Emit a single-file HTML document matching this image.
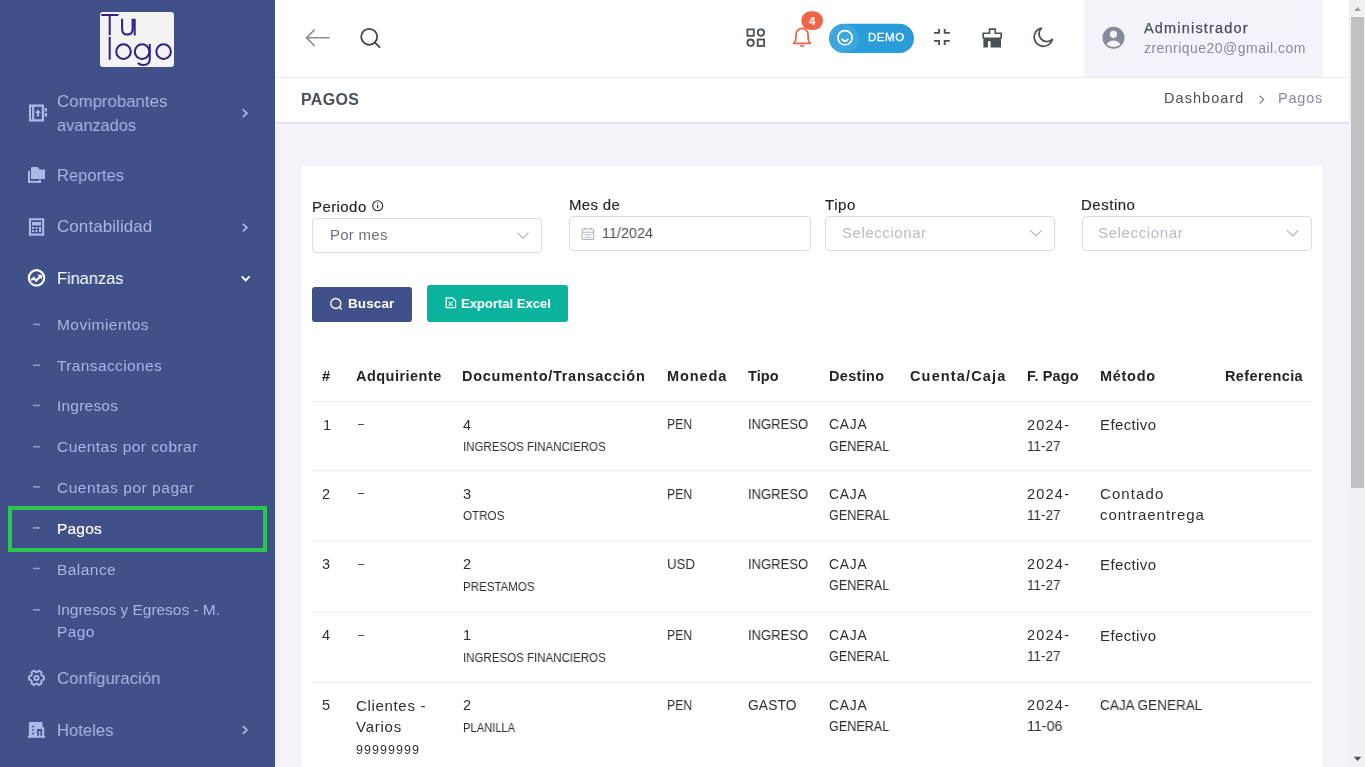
<!DOCTYPE html>
<html><head><meta charset="utf-8">
<style>
*{box-sizing:border-box;margin:0;padding:0}
html,body{width:1365px;height:767px;overflow:hidden;background:#f3f3f9;font-family:"Liberation Sans",sans-serif;color:#212529;position:relative}
.a{position:absolute}
.t{position:absolute;white-space:nowrap;will-change:transform}
svg{position:absolute;overflow:visible}
</style></head><body>
<!-- sidebar -->
<div class="a" style="left:0;top:0;width:275px;height:767px;background:#405189"></div>
<div class="a" style="left:100px;top:12px;width:74px;height:55px;background:#f3f3f3;border-radius:3px"></div>
<div class="a" style="left:8px;top:506px;width:259px;height:46px;border:4px solid #2bc54f"></div>

<!-- sidebar icons -->
<svg style="left:0;top:0" width="275" height="767">
 <g fill="#abb9e8">
  <!-- comprobantes -->
  <path fill-rule="evenodd" d="M29 104.6h15v16.9h-15z M31 106.8v12.5h1.1v-12.5z M34.2 106.8v12.5h7.6v-12.5z"/>
  <path d="M38 109.6l-3 3.3h2v3.7h2v-3.7h2z"/>
  <rect x="44.7" y="108" width="2.3" height="3.5"/><rect x="44.7" y="113" width="2.3" height="3.5"/>
  <!-- reportes -->
  <rect x="28" y="170.8" width="2" height="12"/>
  <rect x="28" y="180.8" width="13" height="2"/>
  <rect x="39" y="179.6" width="2" height="3.2"/>
  <path d="M31 168.2c0-.7.5-1.2 1.2-1.2h5.3l2.2 2.4H45v9.6H31z"/>
  <!-- contabilidad -->
  <path fill-rule="evenodd" d="M28.9 218.2h15.3v17.5H28.9z M31 220.3v13.3h11.1v-13.3z"/>
  <rect x="32" y="222" width="9" height="3.5"/>
  <rect x="32" y="227" width="2" height="2"/><rect x="35.3" y="227" width="2.2" height="2"/><rect x="39" y="227" width="2" height="5"/>
  <rect x="32" y="230" width="2" height="2"/><rect x="35.3" y="230" width="2.2" height="2"/>
  <!-- hoteles -->
  <path d="M29.5 722.1h12.5c.3 0 .5.2.5.5v4.6h1.7v8.8H28.9v-13.4c0-.3.3-.5.6-.5z"/>
  <rect x="27.9" y="735.8" width="17.3" height="2"/>
 </g>
 <g fill="#405189">
  <rect x="32.1" y="725.9" width="2.1" height="1.3"/><rect x="32.1" y="729.4" width="2.1" height="1.3"/><rect x="32.1" y="732.9" width="2.1" height="1.3"/>
  <path d="M37.2 735.8V729H42v6.8h-1.6v-4.9h-1.5v4.9z"/>
 </g>
 <!-- finanzas -->
 <g fill="none" stroke="#fff" stroke-width="2.2">
  <circle cx="36.5" cy="277.9" r="7.7"/>
  <path d="M31 280.3l2.9-2.3 2.2 2.7 4.4-4.4" stroke-width="2"/>
 </g>
 <path d="M37.3 274.8h4.6v4.6z" fill="#fff"/>
 <!-- configuracion -->
 <g fill="none" stroke="#abb9e8" stroke-width="1.9" stroke-linejoin="round">
  <path d="M41.97 675.69 L43.93 676.32 L43.93 679.48 L41.97 680.11 L41.15 681.53 L41.59 683.55 L38.85 685.13 L37.32 683.74 L35.68 683.74 L34.15 685.13 L31.41 683.55 L31.85 681.53 L31.03 680.11 L29.07 679.48 L29.07 676.32 L31.03 675.69 L31.85 674.27 L31.41 672.25 L34.15 670.67 L35.68 672.06 L37.32 672.06 L38.85 670.67 L41.59 672.25 L41.15 674.27Z"/>
  <circle cx="36.5" cy="677.9" r="2.1" stroke-width="1.8"/>
 </g>
 <!-- chevrons -->
 <g fill="none" stroke="#abb9e8" stroke-width="1.7">
  <path d="M242.8 109.4l4.1 3.8-4.1 3.8"/>
  <path d="M242.8 223.8l4.1 3.8-4.1 3.8"/>
  <path d="M242.8 726.2l4.1 3.8-4.1 3.8"/>
 </g>
 <path d="M241.8 276.4l3.9 3.9 3.9-3.9" fill="none" stroke="#fff" stroke-width="1.9"/>
 <!-- dashes -->
 <g fill="#abb9e8" opacity="0.7">
  <rect x="33" y="323.6" width="7" height="1.6"/>
  <rect x="33" y="364.5" width="7" height="1.6"/>
  <rect x="33" y="404.6" width="7" height="1.6"/>
  <rect x="33" y="445.9" width="7" height="1.6"/>
  <rect x="33" y="486" width="7" height="1.6"/>
  <rect x="33" y="527" width="7" height="1.8"/>
  <rect x="33" y="567.7" width="7" height="1.6"/>
  <rect x="33" y="609" width="7" height="1.6"/>
 </g>
 <!-- logo text -->
 <g fill="none" stroke="#2f2187" stroke-width="2" stroke-linecap="butt">
  <path d="M101.2 15h17.2 M109.7 15v20.2"/>
  <path d="M122.1 18.8v9.6c0 4 1.9 6.2 5.2 6.2s5.3-2.2 5.3-6.2V18.8 M134.7 18.8v16.6"/>
  <path d="M109.7 36.8v22.9"/>
  <circle cx="123.5" cy="51.6" r="7.3"/>
  <circle cx="142.1" cy="51.6" r="7.3"/>
  <path d="M149.8 44v14.8c0 4.3-2.5 6.3-6.5 6.3-2.3 0-4.2-.8-5.5-2.1"/>
  <circle cx="163.6" cy="51.6" r="7.3"/>
 </g>
</svg>

<!-- header -->
<div class="a" style="left:275px;top:0;width:1074px;height:77px;background:#fff"></div>
<div class="a" style="left:275px;top:77px;width:1074px;height:1px;background:#e9ebec"></div>
<div class="a" style="left:1084px;top:0;width:239px;height:77px;background:#f3f3f9"></div>
<div class="a" style="left:275px;top:78px;width:1074px;height:44px;background:#fff;box-shadow:0 1px 2px rgba(56,65,74,.15)"></div>

<svg style="left:0;top:0" width="1365" height="130">
 <!-- back arrow -->
 <g fill="none" stroke="#878a99" stroke-width="1.6" stroke-linecap="round">
  <path d="M306.5 37.8h22.6 M314.2 30.1l-7.7 7.7 7.7 7.7"/>
 </g>
 <!-- search -->
 <g fill="none" stroke="#3f454c" stroke-width="1.8" stroke-linecap="round">
  <circle cx="369.2" cy="36.8" r="8"/>
  <path d="M375.2 42.8l4.4 4.4"/>
 </g>
 <!-- grid -->
 <g fill="none" stroke="#495057" stroke-width="1.8">
  <rect x="747.4" y="29.4" width="6.4" height="6.4"/>
  <circle cx="760.9" cy="32.6" r="3.2"/>
  <circle cx="750.6" cy="42.7" r="3.2"/>
  <rect x="757.7" y="39.5" width="6.4" height="6.4"/>
 </g>
 <!-- bell -->
 <path d="M793.6 43.3h16.8c-1.3-1.2-2.3-2.8-2.3-5.1v-3.3c0-3.6-2.8-6.5-6.1-6.5s-6.1 2.9-6.1 6.5v3.3c0 2.3-1 3.9-2.3 5.1z" fill="none" stroke="#f06548" stroke-width="1.8" stroke-linejoin="round"/>
 <path d="M799.2 45.2h5.6c-.2 1.1-1.3 1.8-2.8 1.8s-2.6-.7-2.8-1.8z" fill="#f06548"/>
 <rect x="801.2" y="11.3" width="21.8" height="18.8" rx="9.4" fill="#f06548"/>
 <text x="812.1" y="24.5" fill="#fff" style="font-family:'Liberation Sans';font-weight:bold;font-size:11.5px" text-anchor="middle">4</text>
 <!-- demo pill -->
 <rect x="829" y="23.8" width="85" height="29.2" rx="14.6" fill="#299cdb"/>
 <circle cx="844.2" cy="38.4" r="14.6" fill="#ffffff" opacity="0.1"/>
 <g fill="none" stroke="#fff" stroke-width="1.6">
  <circle cx="845" cy="37.7" r="7.1"/>
  <path d="M841.9 38.6a3.2 3.2 0 0 0 6.2 0" stroke-width="1.8"/>
 </g>
 <!-- compress -->
 <g fill="none" stroke="#495057" stroke-width="1.9">
  <path d="M934 32.9h5.1v-4 M949.8 32.9h-5.1v-4 M934 40.9h5.1v4.1 M949.8 40.9h-5.1v4.1"/>
 </g>
 <!-- store/gift -->
 <path d="M983.2 38.4V33.2h6.3v-4.1h5.8v4.1h5.9v5.2" fill="none" stroke="#495057" stroke-width="1.6"/>
 <path d="M983.4 37.4H1001v10.2h-10.4v-5.2a1.35 1.35 0 0 0-2.7 0v5.2h-4.5z" fill="#495057"/>
 <!-- moon -->
 <path d="M1041.4 28.1a9.2 9.2 0 1 0 10.9 11.3 7.5 7.5 0 0 1-10.9-11.3z" fill="none" stroke="#495057" stroke-width="1.8" stroke-linejoin="round"/>
 <!-- avatar -->
 <circle cx="1113.5" cy="37.8" r="11" fill="#878a99"/>
 <circle cx="1113.5" cy="34.3" r="3.6" fill="#f3f3f9"/>
 <path d="M1106.6 44.2c1.4-2.4 4-3.8 6.9-3.8s5.5 1.4 6.9 3.8c-1.8 1.8-4.2 2.7-6.9 2.7s-5.1-.9-6.9-2.7z" fill="#f3f3f9"/>
 <!-- breadcrumb chevron -->
 <path d="M1259.6 95.8l4 3.8-4 3.8" fill="none" stroke="#878a99" stroke-width="1.4"/>
</svg>

<!-- card -->
<div class="a" style="left:301px;top:166px;width:1022px;height:640px;background:#fff;border-radius:4px;box-shadow:0 1px 2px rgba(56,65,74,.12)"></div>

<!-- inputs -->
<div class="a" style="left:312px;top:218px;width:230px;height:35px;border:1px solid #d8dbe3;border-radius:4px;background:#fff"></div>
<div class="a" style="left:569px;top:216px;width:242px;height:35px;border:1px solid #d8dbe3;border-radius:4px;background:#fff"></div>
<div class="a" style="left:825px;top:216px;width:230px;height:35px;border:1px solid #d8dbe3;border-radius:4px;background:#fff"></div>
<div class="a" style="left:1082px;top:216px;width:230px;height:35px;border:1px solid #d8dbe3;border-radius:4px;background:#fff"></div>

<svg style="left:0;top:0" width="1365" height="767">
 <!-- info icon -->
 <circle cx="377.7" cy="205.8" r="5" fill="none" stroke="#212529" stroke-width="1.1"/>
 <rect x="377.15" y="204.8" width="1.1" height="3.6" fill="#212529"/>
 <rect x="377.15" y="202.6" width="1.1" height="1.1" fill="#212529"/>
 <!-- select chevrons -->
 <g fill="none" stroke="#adb5bd" stroke-width="1.2">
  <path d="M517.3 232.6l5.6 5.6 5.6-5.6"/>
  <path d="M1030.2 230.4l5.7 5.6 5.7-5.6"/>
  <path d="M1287 230.4l5.7 5.6 5.7-5.6"/>
 </g>
 <!-- calendar -->
 <g fill="none" stroke="#adb5bd" stroke-width="1.1">
  <rect x="582.2" y="229" width="11.4" height="10.4" rx="1"/>
  <path d="M582.2 232.3h11.4 M585 227.6v2.2 M590.8 227.6v2.2"/>
 </g>
 <g fill="#adb5bd">
  <rect x="584.4" y="234.2" width="7" height="0.9"/><rect x="584.4" y="236.6" width="7" height="0.9"/>
 </g>
 <!-- buttons -->
 <rect x="312" y="287" width="100" height="35" rx="3" fill="#405189"/>
 <rect x="427" y="285" width="141" height="37" rx="3" fill="#0ab39c"/>
 <g fill="none" stroke="#fff" stroke-width="1.3">
  <circle cx="335.8" cy="303.5" r="5"/>
  <path d="M339.4 307.1l2.4 2.4"/>
 </g>
 <g fill="none" stroke="#fff" stroke-width="1.2">
  <path d="M446.2 297.8h6.2l3.2 3.2v6.6h-9.4z"/>
  <path d="M448.6 301.6l4 4.2 M452.6 301.6l-4 4.2" stroke-width="1.1"/>
 </g>
 <!-- table lines -->
 <g fill="#e9ebec">
  <rect x="312" y="401.2" width="1000" height="1"/>
  <rect x="312" y="470.3" width="1000" height="1"/>
  <rect x="312" y="540.9" width="1000" height="1"/>
  <rect x="312" y="611.7" width="1000" height="1"/>
  <rect x="312" y="681.7" width="1000" height="1"/>
 </g>
</svg>

<div class="t" style="left:56.85px;top:90.91px;font-size:17px;line-height:22px;color:#a8b5e4;transform:scaleX(0.9901);transform-origin:0 0">Comprobantes</div>
<div class="t" style="left:56.85px;top:114.71px;font-size:17px;line-height:22px;color:#a8b5e4;transform:scaleX(0.9617);transform-origin:0 0">avanzados</div>
<div class="t" style="left:57.15px;top:164.51px;font-size:17px;line-height:22px;color:#a8b5e4;transform:scaleX(0.9711);transform-origin:0 0">Reportes</div>
<div class="t" style="left:57.15px;top:216.11px;font-size:17px;line-height:22px;color:#a8b5e4;letter-spacing:0.07px">Contabilidad</div>
<div class="t" style="left:57.15px;top:268.11px;font-size:17px;line-height:22px;color:#ffffff;transform:scaleX(0.9637);transform-origin:0 0">Finanzas</div>
<div class="t" style="left:56.95px;top:668.31px;font-size:17px;line-height:22px;color:#a8b5e4;transform:scaleX(0.9857);transform-origin:0 0">Configuración</div>
<div class="t" style="left:57.15px;top:719.51px;font-size:17px;line-height:22px;color:#a8b5e4;transform:scaleX(0.9767);transform-origin:0 0">Hoteles</div>
<div class="t" style="left:56.62px;top:315.33px;font-size:15.5px;line-height:20px;color:#a8b5e4;letter-spacing:0.46px">Movimientos</div>
<div class="t" style="left:56.62px;top:356.23px;font-size:15.5px;line-height:20px;color:#a8b5e4;letter-spacing:0.38px">Transacciones</div>
<div class="t" style="left:56.62px;top:395.83px;font-size:15.5px;line-height:20px;color:#a8b5e4;letter-spacing:0.21px">Ingresos</div>
<div class="t" style="left:56.62px;top:436.93px;font-size:15.5px;line-height:20px;color:#a8b5e4;letter-spacing:0.45px">Cuentas por cobrar</div>
<div class="t" style="left:56.62px;top:478.03px;font-size:15.5px;line-height:20px;color:#a8b5e4;letter-spacing:0.53px">Cuentas por pagar</div>
<div class="t" style="left:56.62px;top:518.73px;font-size:15.5px;line-height:20px;color:#ffffff;letter-spacing:0.19px;-webkit-text-stroke:0.2px #ffffff">Pagos</div>
<div class="t" style="left:56.62px;top:560.03px;font-size:15.5px;line-height:20px;color:#a8b5e4;letter-spacing:0.45px">Balance</div>
<div class="t" style="left:56.62px;top:600.03px;font-size:15.5px;line-height:20px;color:#a8b5e4;letter-spacing:-0.03px">Ingresos y Egresos - M.</div>
<div class="t" style="left:56.62px;top:621.93px;font-size:15.5px;line-height:20px;color:#a8b5e4;letter-spacing:0.41px">Pago</div>
<div class="t" style="left:1144.08px;top:18.58px;font-size:14.5px;line-height:19px;color:#495057;letter-spacing:1.18px;-webkit-text-stroke:0.25px #495057">Administrador</div>
<div class="t" style="left:1144.10px;top:39.15px;font-size:14px;line-height:18px;color:#878a99;letter-spacing:0.47px">zrenrique20@gmail.com</div>
<div class="t" style="left:301.30px;top:88.76px;font-size:16px;line-height:21px;color:#495057;font-weight:700;letter-spacing:0.34px">PAGOS</div>
<div class="t" style="left:1164.28px;top:89.38px;font-size:14.5px;line-height:19px;color:#495057;letter-spacing:1.05px">Dashboard</div>
<div class="t" style="left:1278.08px;top:89.38px;font-size:14.5px;line-height:19px;color:#878a99;letter-spacing:0.81px">Pagos</div>
<div class="t" style="left:868.02px;top:30.42px;font-size:11.5px;line-height:15px;color:#ffffff;letter-spacing:0.56px;-webkit-text-stroke:0.3px #ffffff">DEMO</div>
<div class="t" style="left:312.25px;top:197.10px;font-size:15px;line-height:20px;color:#212529;letter-spacing:0.42px;-webkit-text-stroke:0.15px #212529">Periodo</div>
<div class="t" style="left:568.75px;top:194.80px;font-size:15px;line-height:20px;color:#212529;letter-spacing:0.34px;-webkit-text-stroke:0.15px #212529">Mes de</div>
<div class="t" style="left:825.25px;top:194.80px;font-size:15px;line-height:20px;color:#212529;letter-spacing:0.56px;-webkit-text-stroke:0.15px #212529">Tipo</div>
<div class="t" style="left:1081.45px;top:194.80px;font-size:15px;line-height:20px;color:#212529;letter-spacing:0.51px;-webkit-text-stroke:0.15px #212529">Destino</div>
<div class="t" style="left:329.75px;top:224.70px;font-size:15px;line-height:20px;color:#6d717b;letter-spacing:0.26px">Por mes</div>
<div class="t" style="left:602.15px;top:223.40px;font-size:15px;line-height:20px;color:#495057;transform:scaleX(0.9596);transform-origin:0 0">11/2024</div>
<div class="t" style="left:842.45px;top:223.00px;font-size:15px;line-height:20px;color:#b6bcc4;letter-spacing:0.57px">Seleccionar</div>
<div class="t" style="left:1098.05px;top:223.00px;font-size:15px;line-height:20px;color:#b6bcc4;letter-spacing:0.63px">Seleccionar</div>
<div class="t" style="left:348.22px;top:295.32px;font-size:13.5px;line-height:18px;color:#ffffff;font-weight:700;letter-spacing:0.11px">Buscar</div>
<div class="t" style="left:460.52px;top:295.32px;font-size:13.5px;line-height:18px;color:#ffffff;font-weight:700;transform:scaleX(0.9660);transform-origin:0 0">Exportal Excel</div>
<div class="t" style="left:322.17px;top:366.88px;font-size:14.5px;line-height:19px;color:#212529;font-weight:700">#</div>
<div class="t" style="left:356.47px;top:366.88px;font-size:14.5px;line-height:19px;color:#212529;font-weight:700;letter-spacing:0.47px">Adquiriente</div>
<div class="t" style="left:462.47px;top:366.88px;font-size:14.5px;line-height:19px;color:#212529;font-weight:700;letter-spacing:0.72px">Documento/Transacción</div>
<div class="t" style="left:666.98px;top:366.88px;font-size:14.5px;line-height:19px;color:#212529;font-weight:700;letter-spacing:0.92px">Moneda</div>
<div class="t" style="left:747.88px;top:366.88px;font-size:14.5px;line-height:19px;color:#212529;font-weight:700;letter-spacing:0.11px">Tipo</div>
<div class="t" style="left:828.88px;top:366.88px;font-size:14.5px;line-height:19px;color:#212529;font-weight:700;letter-spacing:0.33px">Destino</div>
<div class="t" style="left:910.07px;top:366.88px;font-size:14.5px;line-height:19px;color:#212529;font-weight:700;letter-spacing:1.15px">Cuenta/Caja</div>
<div class="t" style="left:1026.88px;top:366.88px;font-size:14.5px;line-height:19px;color:#212529;font-weight:700;letter-spacing:0.15px">F. Pago</div>
<div class="t" style="left:1099.98px;top:366.88px;font-size:14.5px;line-height:19px;color:#212529;font-weight:700;letter-spacing:0.70px">Método</div>
<div class="t" style="left:1224.98px;top:366.88px;font-size:14.5px;line-height:19px;color:#212529;font-weight:700;letter-spacing:0.39px">Referencia</div>
<div class="t" style="left:322.57px;top:415.68px;font-size:14.5px;line-height:19px;color:#2b2f33">1</div>
<div class="t" style="left:462.77px;top:415.68px;font-size:14.5px;line-height:19px;color:#2b2f33">4</div>
<div class="t" style="left:462.90px;top:439.14px;font-size:12px;line-height:16px;color:#2b2f33;transform:scaleX(0.9597);transform-origin:0 0">INGRESOS FINANCIEROS</div>
<div class="t" style="left:667.31px;top:416.42px;font-size:13.8px;line-height:18px;color:#2b2f33;transform:scaleX(0.8785);transform-origin:0 0">PEN</div>
<div class="t" style="left:747.51px;top:416.42px;font-size:13.8px;line-height:18px;color:#2b2f33;transform:scaleX(0.9441);transform-origin:0 0">INGRESO</div>
<div class="t" style="left:829.01px;top:416.42px;font-size:13.8px;line-height:18px;color:#2b2f33;letter-spacing:0.85px">CAJA</div>
<div class="t" style="left:829.01px;top:437.52px;font-size:13.8px;line-height:18px;color:#2b2f33;transform:scaleX(0.9136);transform-origin:0 0">GENERAL</div>
<div class="t" style="left:1026.78px;top:415.68px;font-size:14.5px;line-height:19px;color:#2b2f33;letter-spacing:1.22px">2024-</div>
<div class="t" style="left:1026.78px;top:436.78px;font-size:14.5px;line-height:19px;color:#2b2f33;transform:scaleX(0.9276);transform-origin:0 0">11-27</div>
<div class="t" style="left:1099.75px;top:415.00px;font-size:15px;line-height:20px;color:#2b2f33;letter-spacing:0.38px">Efectivo</div>
<div class="t" style="left:321.97px;top:484.78px;font-size:14.5px;line-height:19px;color:#2b2f33">2</div>
<div class="t" style="left:462.77px;top:484.78px;font-size:14.5px;line-height:19px;color:#2b2f33">3</div>
<div class="t" style="left:462.90px;top:508.24px;font-size:12px;line-height:16px;color:#2b2f33;transform:scaleX(0.9702);transform-origin:0 0">OTROS</div>
<div class="t" style="left:667.31px;top:485.52px;font-size:13.8px;line-height:18px;color:#2b2f33;transform:scaleX(0.8785);transform-origin:0 0">PEN</div>
<div class="t" style="left:747.51px;top:485.52px;font-size:13.8px;line-height:18px;color:#2b2f33;transform:scaleX(0.9441);transform-origin:0 0">INGRESO</div>
<div class="t" style="left:829.01px;top:485.52px;font-size:13.8px;line-height:18px;color:#2b2f33;letter-spacing:0.85px">CAJA</div>
<div class="t" style="left:829.01px;top:506.62px;font-size:13.8px;line-height:18px;color:#2b2f33;transform:scaleX(0.9136);transform-origin:0 0">GENERAL</div>
<div class="t" style="left:1026.78px;top:484.78px;font-size:14.5px;line-height:19px;color:#2b2f33;letter-spacing:1.22px">2024-</div>
<div class="t" style="left:1026.78px;top:505.88px;font-size:14.5px;line-height:19px;color:#2b2f33;transform:scaleX(0.9276);transform-origin:0 0">11-27</div>
<div class="t" style="left:1099.75px;top:484.10px;font-size:15px;line-height:20px;color:#2b2f33;letter-spacing:1.10px">Contado</div>
<div class="t" style="left:1099.75px;top:505.20px;font-size:15px;line-height:20px;color:#2b2f33;letter-spacing:0.94px">contraentrega</div>
<div class="t" style="left:321.97px;top:555.38px;font-size:14.5px;line-height:19px;color:#2b2f33">3</div>
<div class="t" style="left:462.77px;top:555.38px;font-size:14.5px;line-height:19px;color:#2b2f33">2</div>
<div class="t" style="left:462.90px;top:578.84px;font-size:12px;line-height:16px;color:#2b2f33;transform:scaleX(0.9614);transform-origin:0 0">PRESTAMOS</div>
<div class="t" style="left:667.31px;top:556.12px;font-size:13.8px;line-height:18px;color:#2b2f33;transform:scaleX(0.9572);transform-origin:0 0">USD</div>
<div class="t" style="left:747.51px;top:556.12px;font-size:13.8px;line-height:18px;color:#2b2f33;transform:scaleX(0.9441);transform-origin:0 0">INGRESO</div>
<div class="t" style="left:829.01px;top:556.12px;font-size:13.8px;line-height:18px;color:#2b2f33;letter-spacing:0.85px">CAJA</div>
<div class="t" style="left:829.01px;top:577.22px;font-size:13.8px;line-height:18px;color:#2b2f33;transform:scaleX(0.9136);transform-origin:0 0">GENERAL</div>
<div class="t" style="left:1026.78px;top:555.38px;font-size:14.5px;line-height:19px;color:#2b2f33;letter-spacing:1.22px">2024-</div>
<div class="t" style="left:1026.78px;top:576.48px;font-size:14.5px;line-height:19px;color:#2b2f33;transform:scaleX(0.9276);transform-origin:0 0">11-27</div>
<div class="t" style="left:1099.75px;top:554.70px;font-size:15px;line-height:20px;color:#2b2f33;letter-spacing:0.38px">Efectivo</div>
<div class="t" style="left:321.97px;top:626.18px;font-size:14.5px;line-height:19px;color:#2b2f33">4</div>
<div class="t" style="left:462.77px;top:626.18px;font-size:14.5px;line-height:19px;color:#2b2f33">1</div>
<div class="t" style="left:462.90px;top:649.64px;font-size:12px;line-height:16px;color:#2b2f33;transform:scaleX(0.9597);transform-origin:0 0">INGRESOS FINANCIEROS</div>
<div class="t" style="left:667.31px;top:626.92px;font-size:13.8px;line-height:18px;color:#2b2f33;transform:scaleX(0.8785);transform-origin:0 0">PEN</div>
<div class="t" style="left:747.51px;top:626.92px;font-size:13.8px;line-height:18px;color:#2b2f33;transform:scaleX(0.9441);transform-origin:0 0">INGRESO</div>
<div class="t" style="left:829.01px;top:626.92px;font-size:13.8px;line-height:18px;color:#2b2f33;letter-spacing:0.85px">CAJA</div>
<div class="t" style="left:829.01px;top:648.02px;font-size:13.8px;line-height:18px;color:#2b2f33;transform:scaleX(0.9136);transform-origin:0 0">GENERAL</div>
<div class="t" style="left:1026.78px;top:626.18px;font-size:14.5px;line-height:19px;color:#2b2f33;letter-spacing:1.22px">2024-</div>
<div class="t" style="left:1026.78px;top:647.28px;font-size:14.5px;line-height:19px;color:#2b2f33;transform:scaleX(0.9276);transform-origin:0 0">11-27</div>
<div class="t" style="left:1099.75px;top:625.50px;font-size:15px;line-height:20px;color:#2b2f33;letter-spacing:0.38px">Efectivo</div>
<div class="t" style="left:321.97px;top:696.18px;font-size:14.5px;line-height:19px;color:#2b2f33">5</div>
<div class="t" style="left:356.35px;top:695.50px;font-size:15px;line-height:20px;color:#2b2f33;letter-spacing:0.67px">Clientes -</div>
<div class="t" style="left:356.35px;top:716.60px;font-size:15px;line-height:20px;color:#2b2f33;letter-spacing:0.76px">Varios</div>
<div class="t" style="left:356.48px;top:741.57px;font-size:12.5px;line-height:16px;color:#2b2f33;letter-spacing:1.05px">99999999</div>
<div class="t" style="left:462.77px;top:696.18px;font-size:14.5px;line-height:19px;color:#2b2f33">2</div>
<div class="t" style="left:462.90px;top:719.64px;font-size:12px;line-height:16px;color:#2b2f33;transform:scaleX(0.9308);transform-origin:0 0">PLANILLA</div>
<div class="t" style="left:667.31px;top:696.92px;font-size:13.8px;line-height:18px;color:#2b2f33;transform:scaleX(0.8785);transform-origin:0 0">PEN</div>
<div class="t" style="left:747.51px;top:696.92px;font-size:13.8px;line-height:18px;color:#2b2f33;letter-spacing:0.12px">GASTO</div>
<div class="t" style="left:829.01px;top:696.92px;font-size:13.8px;line-height:18px;color:#2b2f33;letter-spacing:0.85px">CAJA</div>
<div class="t" style="left:829.01px;top:718.02px;font-size:13.8px;line-height:18px;color:#2b2f33;transform:scaleX(0.9136);transform-origin:0 0">GENERAL</div>
<div class="t" style="left:1026.78px;top:696.18px;font-size:14.5px;line-height:19px;color:#2b2f33;letter-spacing:1.22px">2024-</div>
<div class="t" style="left:1026.78px;top:717.28px;font-size:14.5px;line-height:19px;color:#2b2f33;transform:scaleX(0.9816);transform-origin:0 0">11-06</div>
<div class="t" style="left:1099.81px;top:696.92px;font-size:13.8px;line-height:18px;color:#2b2f33;transform:scaleX(0.9811);transform-origin:0 0">CAJA GENERAL</div>
<div class="a" style="left:357.6px;top:424.1px;width:6px;height:1.3px;background:#4a4e52"></div>
<div class="a" style="left:357.6px;top:493.2px;width:6px;height:1.3px;background:#4a4e52"></div>
<div class="a" style="left:357.6px;top:563.8px;width:6px;height:1.3px;background:#4a4e52"></div>
<div class="a" style="left:357.6px;top:634.6px;width:6px;height:1.3px;background:#4a4e52"></div>

<!-- scrollbar -->
<div class="a" style="left:1349px;top:0;width:16px;height:767px;background:#f1f1f1"></div>
<div class="a" style="left:1351px;top:17px;width:13px;height:471px;background:#c1c1c1"></div>
<svg style="left:0;top:0" width="1365" height="767">
 <path d="M1354 11l3.5-4.2 3.5 4.2z" fill="#a3a3a3"/>
 <path d="M1353.8 756.7h7.5l-3.75 4.2z" fill="#505050"/>
</svg>
</body></html>
